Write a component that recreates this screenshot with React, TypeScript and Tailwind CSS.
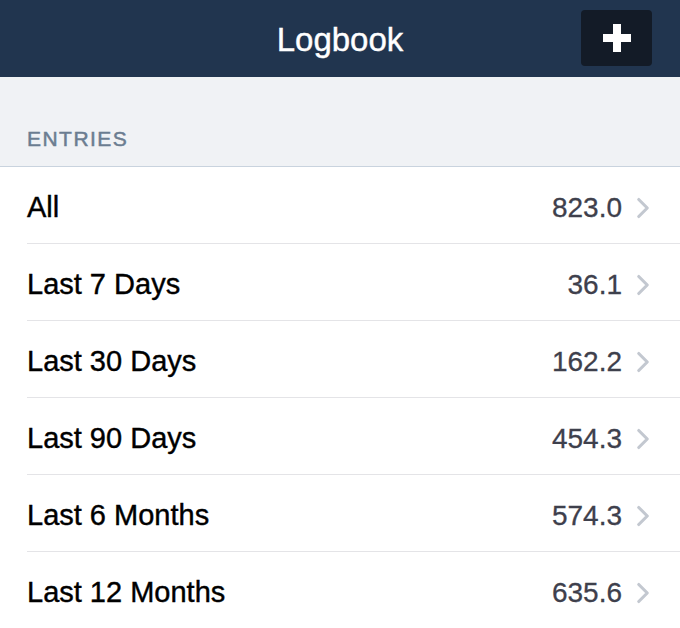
import { ChevronRight } from 'lucide-react';

const entries = [
  { label: 'All', total: '823.0' },
  { label: 'Last 7 Days', total: '36.1' },
  { label: 'Last 30 Days', total: '162.2' },
  { label: 'Last 90 Days', total: '454.3' },
  { label: 'Last 6 Months', total: '574.3' },
  { label: 'Last 12 Months', total: '635.6' },
];

export default function App() {
  return (
    <div className="h-[628px] w-[680px] overflow-hidden bg-white font-['Liberation_Sans',Arial,sans-serif]">
      {/* Nav bar */}
      <header className="relative flex h-[77px] items-center justify-center bg-[#21354f]">
        <h1 className="pt-[2px] text-[33px] leading-none text-white [-webkit-text-stroke:0.4px_white]">Logbook</h1>
        <button className="absolute right-[28px] top-[10px] flex h-[56px] w-[71px] items-center justify-center rounded-[4px] bg-[#131b27]">
          <span className="relative block h-[28px] w-[28px]">
            <span className="absolute left-[10px] top-0 h-[28px] w-[8px] bg-white" />
            <span className="absolute left-0 top-[10px] h-[8px] w-[28px] bg-white" />
          </span>
        </button>
      </header>

      {/* Section header */}
      <div className="flex h-[90px] items-end border-b border-[#c9d3de] bg-[#f0f2f5] px-[27px] pb-[17px]">
        <span className="text-[21px] leading-none tracking-[0.07em] text-[#6b7d91] [-webkit-text-stroke:0.5px_#6b7d91]">
          ENTRIES
        </span>
      </div>

      <ul>
        {entries.map((e) => (
          <li key={e.label} className="flex h-[77px] items-stretch pl-[27px]">
            <div className="flex flex-1 items-center border-b border-[#e4e4e7] pr-[20px] pt-[5px]">
              <span className="flex-1 text-[29px] leading-none text-black [-webkit-text-stroke:0.4px_black]">
                {e.label}
              </span>
              <span className="text-[28px] leading-none text-[#3e404c] [-webkit-text-stroke:0.3px_#3e404c]">
                {e.total}
              </span>
              <ChevronRight className="ml-[4px] h-[34px] w-[34px] text-[#c3c8d0]" strokeWidth={2.2} />
            </div>
          </li>
        ))}
      </ul>
    </div>
  );
}
